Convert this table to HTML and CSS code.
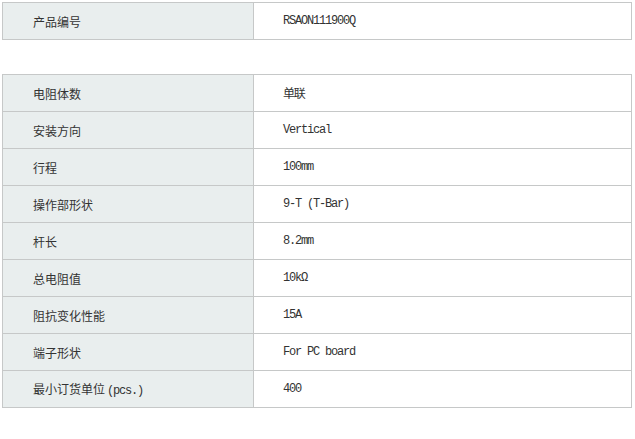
FILE: index.html
```html
<!DOCTYPE html>
<html lang="zh-CN">
<head>
<meta charset="utf-8">
<title>产品规格</title>
<link rel="stylesheet" href="styles.css">
</head>
<body>
<div class="page">
  <table class="spec">
    <tr><th>产品编号</th><td>RSAON111900Q</td></tr>
  </table>
  <table class="spec spec-main">
    <tr><th>电阻体数</th><td>单联</td></tr>
    <tr><th>安装方向</th><td>Vertical</td></tr>
    <tr><th>行程</th><td>100mm</td></tr>
    <tr><th>操作部形状</th><td>9-T (T-Bar)</td></tr>
    <tr><th>杆长</th><td>8.2mm</td></tr>
    <tr><th>总电阻值</th><td>10kΩ</td></tr>
    <tr><th>阻抗变化性能</th><td>15A</td></tr>
    <tr><th>端子形状</th><td>For PC board</td></tr>
    <tr><th>最小订货单位<span class="lat">(pcs.)</span></th><td>400</td></tr>
  </table>
</div>
</body>
</html>
```
FILE: styles.css
```css
html, body {
  margin: 0;
  padding: 0;
  background: #ffffff;
}
.page {
  padding: 2px 0 0 2px;
}
.spec {
  border-collapse: separate;
  border-spacing: 0;
  width: 630px;
  border-top: 1px solid #c6c8c8;
  border-left: 1px solid #c6c8c8;
  table-layout: fixed;
}
.spec-main {
  margin-top: 34px;
}
.spec th,
.spec td {
  height: 36px;
  padding: 0;
  border-right: 1px solid #c6c8c8;
  border-bottom: 1px solid #c6c8c8;
  vertical-align: middle;
  text-align: left;
  color: #333333;
}
.spec th {
  width: 220px;
  padding-left: 30px;
  background: #e9eeee;
  font-weight: normal;
  font-family: "Noto Sans CJK SC", sans-serif;
  font-size: 12px;
}
.spec td {
  padding-left: 29px;
  background: #ffffff;
  font-family: "Liberation Mono", "Noto Sans CJK SC", monospace;
  font-size: 12px;
  letter-spacing: -1.2px;
}
.lat {
  font-family: "Liberation Mono", monospace;
  font-size: 12px;
  letter-spacing: -1.2px;
  padding-left: 2px;
}
```
